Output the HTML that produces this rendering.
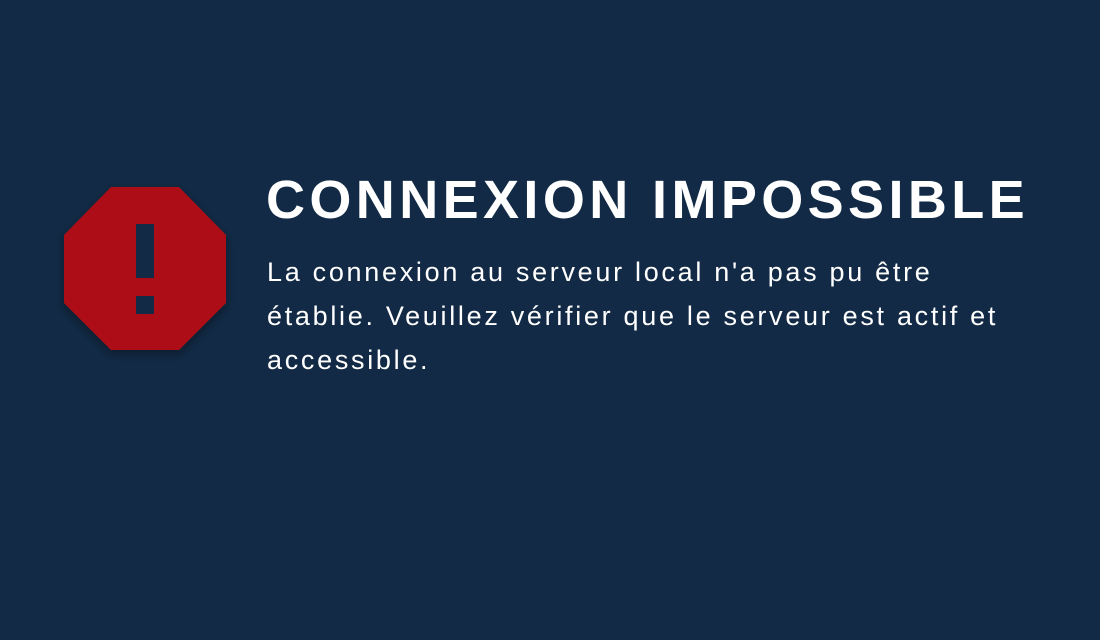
<!DOCTYPE html>
<html><head><meta charset="utf-8"><style>
html,body{margin:0;padding:0;width:1100px;height:640px;background:#122a45;overflow:hidden;font-family:"Liberation Sans",sans-serif;color:#fff}
svg{position:absolute;left:0;top:0}
h1{position:absolute;left:266px;top:168px;margin:0;font-size:54px;font-weight:bold;letter-spacing:4.4px;white-space:nowrap;line-height:64px}
p{position:absolute;left:267px;top:250px;margin:0;font-size:27px;line-height:44px;white-space:nowrap;letter-spacing:2.7px}
</style></head><body>
<svg width="300" height="400">
<defs><filter id="s" x="-20%" y="-20%" width="140%" height="140%"><feDropShadow dx="0" dy="4" stdDeviation="5" flood-color="#000" flood-opacity="0.35"/></filter></defs>
<polygon filter="url(#s)" fill="#ad1019" points="111,187 179,187 226,235 226,303 179,350 111,350 64,303 64,235"/>
<rect x="136" y="224" width="18" height="54" fill="#122a45"/>
<rect x="136" y="296" width="18" height="18" fill="#122a45"/>
</svg>
<h1>CONNEXION IMPOSSIBLE</h1>
<p>La connexion au serveur local n'a pas pu être<br>établie. Veuillez vérifier que le serveur est actif et<br>accessible.</p>
</body></html>
